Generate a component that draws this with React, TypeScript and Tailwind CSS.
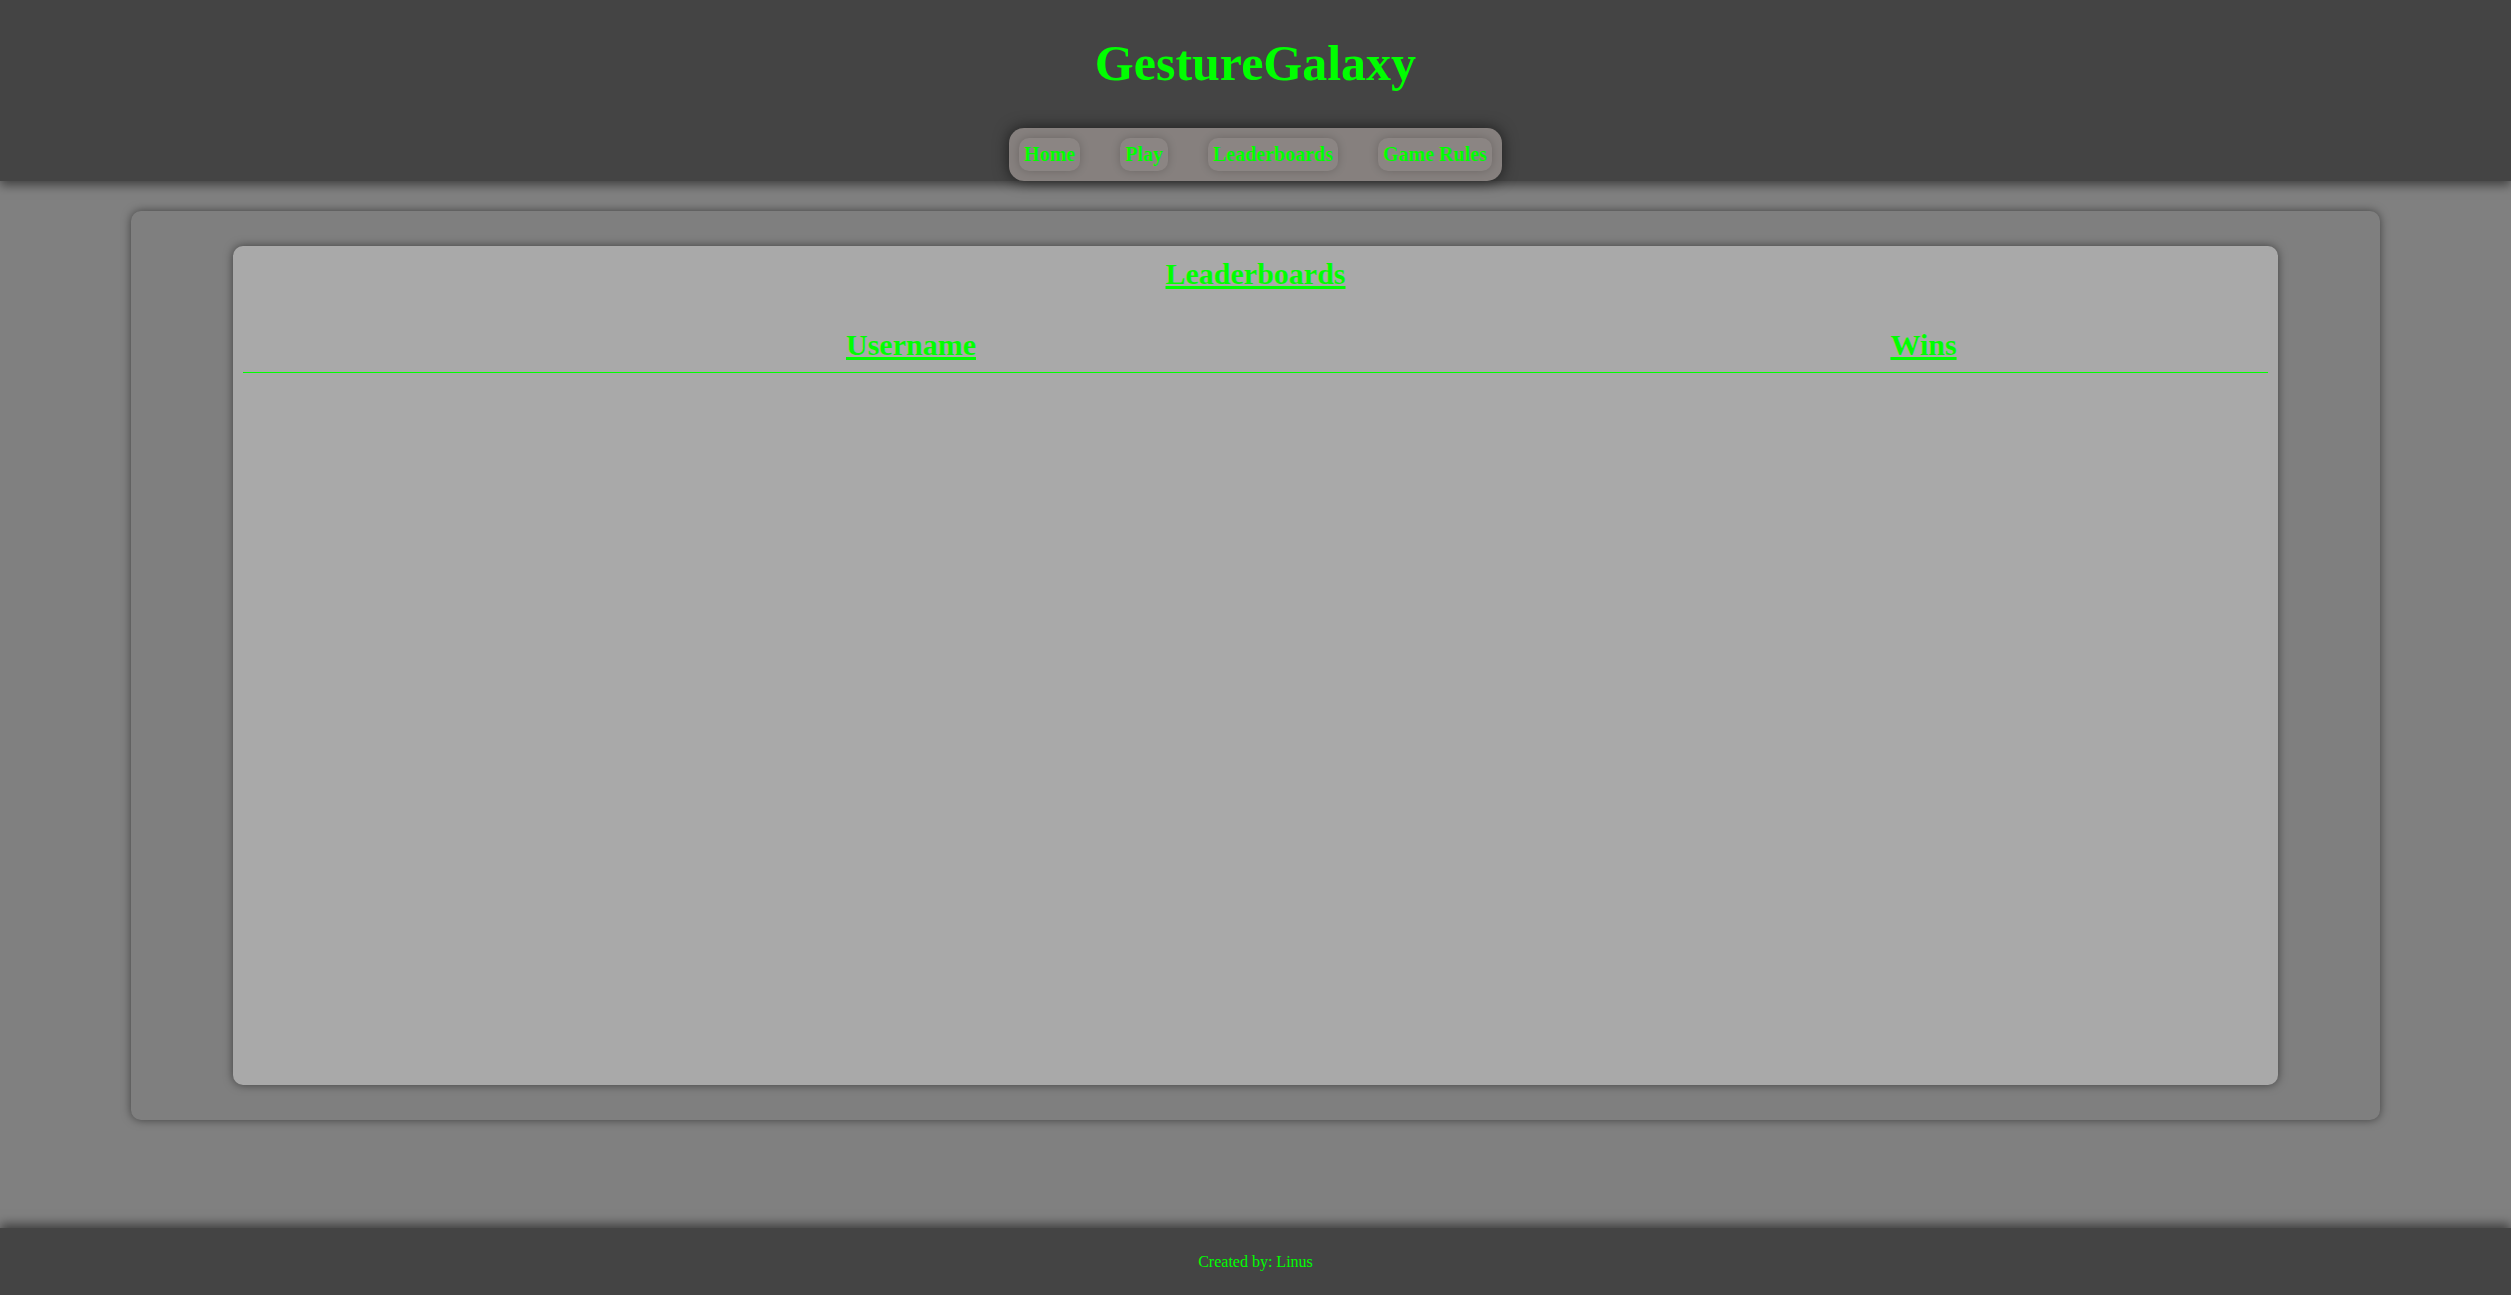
import React from "react";

export default function App() {
  const navItems = ["Home", "Play", "Leaderboards", "Game Rules"];
  return (
    <div className="flex h-[1295px] flex-col bg-[#808080] font-['Liberation_Serif','Times_New_Roman',serif] text-[#00ff00]">
      <header className="relative z-10 flex h-[181px] flex-col items-center bg-[#444444] pt-[35px] shadow-[0_4px_10px_rgba(0,0,0,0.5)]">
        <h1 className="h-[56px] text-[50px] font-bold leading-[56px]">GestureGalaxy</h1>
        <nav className="mt-[37px] flex h-[53px] items-center gap-[40px] rounded-[15px] bg-[#86807e] px-[10px] shadow-[0_0_15px_rgba(0,0,0,0.6)]">
          {navItems.map((item) => (
            <a
              key={item}
              className="h-[33px] rounded-[10px] bg-[#8b8583] px-[5px] text-[20px] font-bold leading-[33px] shadow-[0_0_10px_rgba(0,0,0,0.2)]"
            >
              {item}
            </a>
          ))}
        </nav>
      </header>
      <main className="flex-1 px-[131px] pt-[30px]">
        <section className="h-[909px] rounded-[10px] bg-[#7f7f7f] px-[102px] py-[35px] shadow-[0_0_10px_rgba(0,0,0,0.5)]">
          <div className="h-full rounded-[10px] bg-[#a9a9a9] px-[10px] pt-[10px] shadow-[0_0_10px_rgba(0,0,0,0.5)]">
            <h2 className="text-center text-[30px] font-bold leading-[35px] underline decoration-[3px] underline-offset-[2px]">
              Leaderboards
            </h2>
            <div className="mt-[26px] grid grid-cols-[1336px_1fr] border-b border-[#00ff00]">
              <div className="py-[10px] text-center text-[30px] font-bold leading-[35px] underline decoration-[3px] underline-offset-[2px]">
                Username
              </div>
              <div className="py-[10px] text-center text-[30px] font-bold leading-[35px] underline decoration-[3px] underline-offset-[2px]">
                Wins
              </div>
            </div>
          </div>
        </section>
      </main>
      <footer className="relative z-10 h-[67px] bg-[#444444] text-center text-[16px] leading-[68px] shadow-[0_-4px_10px_rgba(0,0,0,0.5)]">
        Created by: Linus
      </footer>
    </div>
  );
}
